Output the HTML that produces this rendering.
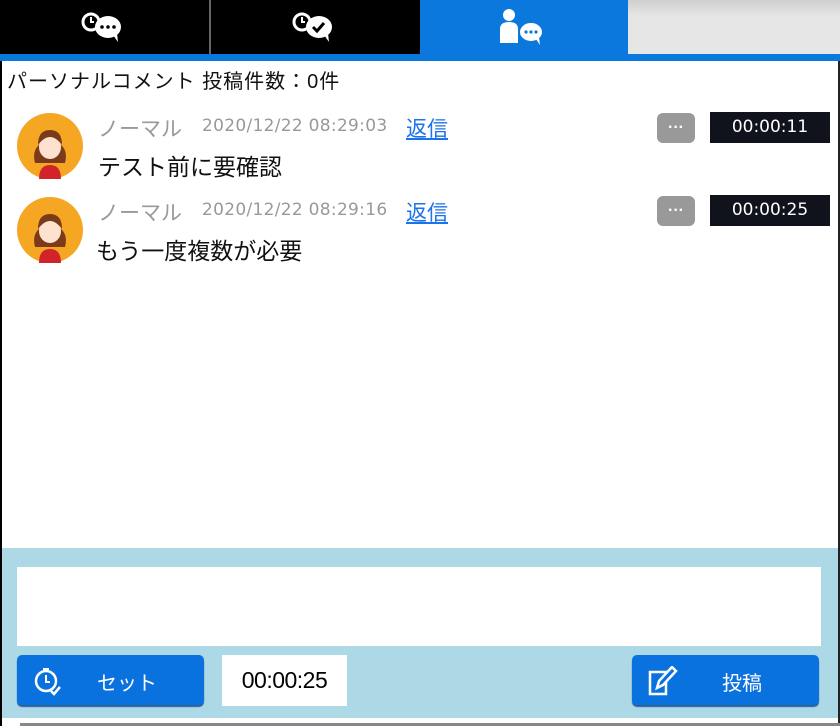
<!DOCTYPE html>
<html><head><meta charset="utf-8"><style>
*{box-sizing:border-box;margin:0;padding:0}
body{width:840px;height:726px;position:relative;background:#fff;font-family:"Liberation Sans","Noto Sans CJK JP",sans-serif;overflow:hidden}
.abs{position:absolute}
.tab{position:absolute;top:0;height:54px;display:flex;align-items:center;justify-content:center}
.name{color:#999;font-size:21px}
.date{color:#999;letter-spacing:0.3px;font-family:"DejaVu Sans",sans-serif;font-size:17px}
.reply{color:#1a73e8;text-decoration:underline;font-size:21px}
.msg{font-size:23px;color:#111}
.dots{position:absolute;width:38px;height:30px;background:#999;border-radius:6px;color:#fff;font-weight:bold;text-align:center;line-height:30px;font-size:16px}
.tm{position:absolute;width:120px;height:31px;background:#11131c;color:#fff;font-size:17px;text-align:center;line-height:31px;font-family:"DejaVu Sans",sans-serif}
.btn{position:absolute;background:#0a72de;border-radius:5px;color:#fff;font-size:20px;box-shadow:0 2px 1px #2a5d9a}
</style></head><body>
<div class="abs" style="left:0;top:0;width:2px;height:726px;background:#000"></div>
<div class="abs" style="right:0;top:0;width:2px;height:726px;background:#222"></div>
<div class="tab" style="left:0;width:209px;background:#000">
<svg width="50" height="34" viewBox="0 0 50 34"><circle cx="11" cy="12" r="8" fill="none" stroke="#fff" stroke-width="3"/><path d="M11 7v5h3" stroke="#fff" stroke-width="2" fill="none"/><ellipse cx="28" cy="17" rx="13" ry="11" fill="#fff"/><path d="M33 25l5 7-1-9z" fill="#fff"/><circle cx="22" cy="17" r="1.8"/><circle cx="28" cy="17" r="1.8"/><circle cx="34" cy="17" r="1.8"/></svg></div>
<div class="abs" style="left:209px;top:0;width:2px;height:54px;background:#666"></div>
<div class="tab" style="left:211px;width:209px;background:#000">
<svg width="50" height="34" viewBox="0 0 50 34"><circle cx="11" cy="12" r="8" fill="none" stroke="#fff" stroke-width="3"/><path d="M11 7v5h3" stroke="#fff" stroke-width="2" fill="none"/><ellipse cx="28" cy="17" rx="13" ry="11" fill="#fff"/><path d="M33 25l5 7-1-9z" fill="#fff"/><path d="M22 17l4 4 7-8" stroke="#000" stroke-width="3" fill="none"/></svg></div>
<div class="tab" style="left:420px;width:208px;background:#0a78dc">
<svg width="56" height="40" viewBox="0 0 56 40"><circle cx="13" cy="8" r="6" fill="#fff"/><path d="M4 36V22q0-7 9-7t9 7v14z" fill="#fff"/><ellipse cx="35" cy="25" rx="12" ry="10" fill="#fff" stroke="#0a78dc" stroke-width="2"/><path d="M40 32l4 6-1-8z" fill="#fff"/><circle cx="30" cy="25" r="1.6" fill="#0a78dc"/><circle cx="35" cy="25" r="1.6" fill="#0a78dc"/><circle cx="40" cy="25" r="1.6" fill="#0a78dc"/></svg></div>
<div class="tab" style="left:628px;width:212px;background:linear-gradient(#cfcfcf,#e6e6e6 30%)"></div>
<div class="abs" style="left:0;top:54px;width:840px;height:7px;background:#0a78dc"></div>
<div class="abs" style="left:7px;top:65px;font-size:20px;color:#111;letter-spacing:1px">パーソナルコメント 投稿件数：0件</div>

<svg class="abs" style="left:17px;top:113px" width="66" height="66" viewBox="0 0 66 66"><circle cx="33" cy="33" r="33" fill="#f5a623"/><path d="M18 50q-3-12 4-18l22 0q7 6 4 18z" fill="#7b3a1a"/><path d="M22 66q0-14 11-14t11 14" fill="#d0232a"/><ellipse cx="33" cy="34" rx="11" ry="12" fill="#fde3cf"/><path d="M21 32q0-15 12-15t12 15q-6-8-12-8t-12 8z" fill="#7b3a1a"/></svg>
<div class="abs name" style="left:98px;top:113px">ノーマル</div>
<div class="abs date" style="left:202px;top:116px">2020/12/22 08:29:03</div>
<div class="abs reply" style="left:406px;top:113px">返信</div>
<div class="abs msg" style="left:98px;top:148px">テスト前に要確認</div>
<div class="dots" style="left:657px;top:113px">···</div>
<div class="tm" style="left:710px;top:112px">00:00:11</div>

<svg class="abs" style="left:17px;top:197px" width="66" height="66" viewBox="0 0 66 66"><circle cx="33" cy="33" r="33" fill="#f5a623"/><path d="M18 50q-3-12 4-18l22 0q7 6 4 18z" fill="#7b3a1a"/><path d="M22 66q0-14 11-14t11 14" fill="#d0232a"/><ellipse cx="33" cy="34" rx="11" ry="12" fill="#fde3cf"/><path d="M21 32q0-15 12-15t12 15q-6-8-12-8t-12 8z" fill="#7b3a1a"/></svg>
<div class="abs name" style="left:98px;top:197px">ノーマル</div>
<div class="abs date" style="left:202px;top:200px">2020/12/22 08:29:16</div>
<div class="abs reply" style="left:406px;top:197px">返信</div>
<div class="abs msg" style="left:96px;top:232px">もう一度複数が必要</div>
<div class="dots" style="left:657px;top:196px">···</div>
<div class="tm" style="left:710px;top:195px">00:00:25</div>

<div class="abs" style="left:2px;top:548px;width:836px;height:170px;background:#add8e6"></div>
<div class="abs" style="left:17px;top:567px;width:804px;height:79px;background:#fff"></div>
<div class="btn" style="left:17px;top:655px;width:187px;height:50px">
<svg class="abs" style="left:16px;top:11px" width="30" height="30" viewBox="0 0 30 30"><circle cx="13" cy="15" r="10" fill="none" stroke="#fff" stroke-width="2.5"/><path d="M13 9v7h4M10 3h6" stroke="#fff" stroke-width="2" fill="none"/><path d="M18 25l3 3 6-7" stroke="#fff" stroke-width="2.5" fill="none"/></svg>
<span class="abs" style="left:80px;top:12px">セット</span></div>
<div class="abs" style="left:222px;top:655px;width:125px;height:51px;background:#fff;font-size:23px;text-align:center;line-height:51px;letter-spacing:-0.5px">00:00:25</div>
<div class="btn" style="left:632px;top:655px;width:187px;height:50px">
<svg class="abs" style="left:16px;top:11px" width="32" height="30" viewBox="0 0 32 30"><path d="M2 6h16v22H2z" fill="none" stroke="#fff" stroke-width="2.5"/><path d="M9 22l2-7 13-14 4 4-13 14z" fill="#0a72de" stroke="#fff" stroke-width="2.5"/></svg>
<span class="abs" style="left:90px;top:12px">投稿</span></div>
<div class="abs" style="left:20px;top:723px;width:820px;height:3px;background:#888"></div>
</body></html>
